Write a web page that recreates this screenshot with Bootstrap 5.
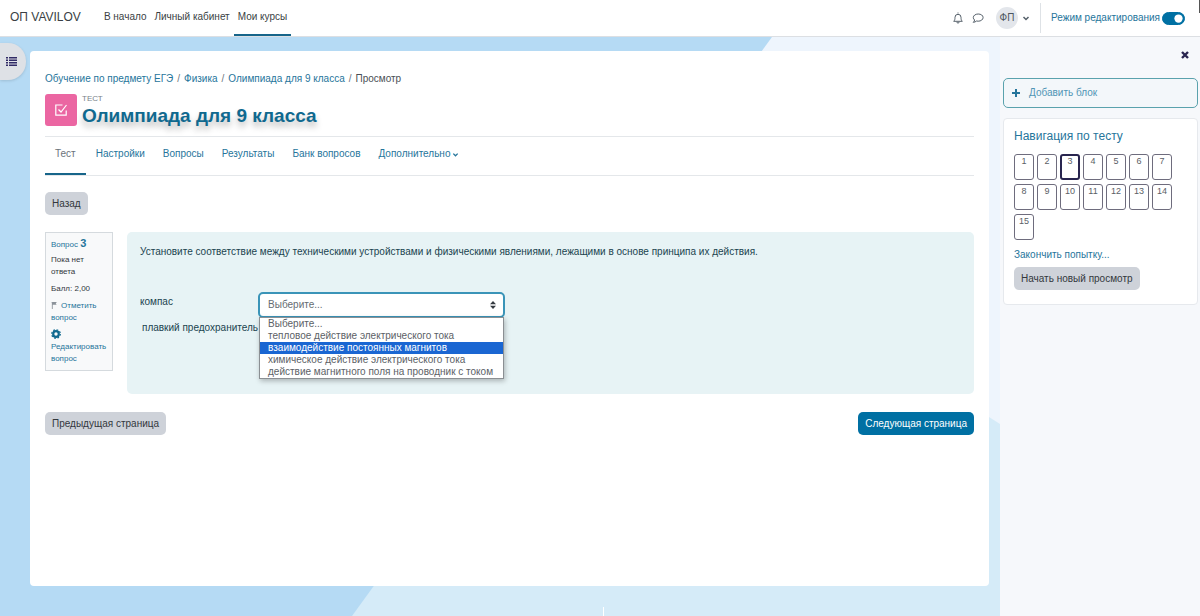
<!DOCTYPE html>
<html lang="ru">
<head>
<meta charset="utf-8">
<meta name="viewport" content="width=device-width, initial-scale=1">
<title>Олимпиада для 9 класса</title>
<link href="https://cdn.jsdelivr.net/npm/bootstrap@5.3.0/dist/css/bootstrap.min.css" rel="stylesheet">
<style>
:root{--brand:#0070a3;--line:#e4e7ea;--ink:#33383d}
body{font-family:"Liberation Sans",Arial,sans-serif;font-size:10px;line-height:12px;color:var(--ink);background:#b5daf4}
a{color:#26759b;text-decoration:none}
svg{display:block}
.topbar{height:37px;border-bottom:1px solid #dcdfe3;padding:0 10px;background:linear-gradient(#555,#555) right top/1px 13px no-repeat #fff}
.topbar .navbar-brand{font-size:12px;line-height:16px;color:#3a3f44;margin:0 19px 2px 0;padding:0}
.topbar .nav-link{font-size:10px;color:#3a3f44;padding:0 4px 1px;border-bottom:2px solid transparent;display:flex;align-items:center}
.topbar .nav-link.active{border-color:#17658a}
.avatar-dot{width:22px;height:22px;border-radius:50%;background:#e3e6eb;color:#4b5560}
.icon-btn{border:0;background:none;padding:0;color:#55606a}
.user-btn{margin-right:10px}
.edit-mode{border-left:1px solid #dee2e6;height:30px;padding:0 5px 0 10px;color:#26759b;gap:2px}
.edit-mode .form-check-input{width:23px;height:13px;margin:0;background-color:var(--brand);border-color:var(--brand)}
.backdrop-art{position:absolute;inset:0;width:100%;height:100%}
.stage{padding:14px 11px 30px 30px}
.index-toggle{position:absolute;left:0;top:6px;width:26px;height:37px;border:0;border-radius:0 18px 18px 0;background:#dee1e6;padding:0 0 0 6px;box-shadow:0 1px 3px #0002;color:#302b66}
.sheet{border-radius:4px;padding:22px 15px}
.breadcrumb{--bs-breadcrumb-item-padding-x:4px;--bs-breadcrumb-divider-color:#6c757d;--bs-breadcrumb-item-active-color:#4a4f55;font-size:10px;margin-bottom:9px}
.activity{gap:5px}
.activity-icon{width:32px;height:32px;border-radius:3px;background:#eb66a2}
.kind{font-size:8px;line-height:10px;color:#7a828a}
.title-text{font-size:19px;line-height:24px;font-weight:700;color:#10698f;text-shadow:0 5px 6px #0004}
.tabs{border-top:1px solid var(--line);border-bottom:1px solid var(--line);margin-top:8px;height:40px}
.tabs .nav-link{font-size:10px;color:#26759b;padding:0 9px 2px;border-bottom:2px solid transparent;display:flex;align-items:center;gap:2px}
.tabs .nav-link.active{color:#6b737b;border-color:#17658a;padding:0 10px 2px;margin-right:1px}
.btn{--bs-btn-font-size:10px;--bs-btn-line-height:13px;--bs-btn-padding-x:7px;--bs-btn-padding-y:5px;--bs-btn-border-radius:5px;--bs-btn-border-width:0}
.btn-soft{--bs-btn-bg:#ced2d9;--bs-btn-color:#33383d}
.btn-brand{--bs-btn-bg:#0070a3;--bs-btn-color:#fff}
.question{gap:14px;margin-top:17px}
.q-info{width:68px;border:1px solid #d5dade;background:#f8f9fa;padding:5px;font-size:8px}
.q-info div{margin-bottom:5px}
.q-info .q-no{margin-bottom:3px}
.q-info div:last-child{margin-bottom:0}
.q-info .gear{margin-bottom:2px}
.q-info b{font-size:11px;line-height:11px}
.q-body{background:#e7f3f5;border-radius:5px;padding:14px 13px;height:162px;color:#20434f}
.q-body table{margin-top:34px}
.q-body td{height:24px;padding:0;vertical-align:top}
.q-body td:first-child{padding:4px 0 0}
.q-body td.inset{padding-left:2px}
.pick{position:relative;width:247px}
.pick select{width:247px;height:26px;border:2px solid #3a94b8;border-radius:5px;background:#fff;color:#666c72;font-size:10px;padding:0 8px;appearance:none}
.pick svg{position:absolute;right:9px;top:9px}
.menu{position:absolute;left:1px;top:25px;width:245px;border:1px solid #8b8f93;background:#fff;box-shadow:1px 2px 5px #0004;color:#5c6166;margin:0;padding:0;list-style:none}
.menu li{padding:0 8px;line-height:12px}
.menu li.on{background:#1a66d2;color:#fff}
.pager{margin-top:18px}
.drawer{width:200px;background:#f6f8fb;padding:13px 2px 0 3px}
.add-block{border:1px solid #5aa2ad;border-radius:5px;height:30px;padding:0 8px;gap:9px;background:#f3f7fa;color:#5095b5;margin-top:18px}
.nav-block{margin-top:10px;border:1px solid #e6e9ed;border-radius:4px;padding:9px 10px 14px}
.nav-block h2{font-size:12px;line-height:16px;font-weight:400;color:#26759b;margin-bottom:10px}
.q-grid{gap:4px 3px}
.q-grid a{width:20px;height:26px;border:1px solid #6e6c7d;border-radius:3px;text-align:center;font-size:9px;line-height:13px;color:#5a5e66}
.q-grid a.here{border:2px solid #29254f;line-height:11px}
.finish{margin:9px 0 6px}
</style>
</head>
<body class="min-vh-100 d-flex flex-column">
<header class="topbar d-flex align-items-center">
  <a class="navbar-brand" href="#">ОП VAVILOV</a>
  <nav class="nav align-self-stretch">
    <a class="nav-link" href="#">В начало</a>
    <a class="nav-link" href="#">Личный кабинет</a>
    <a class="nav-link active" href="#">Мои курсы</a>
  </nav>
  <div class="ms-auto d-flex align-items-center">
    <button class="icon-btn me-2" aria-label="Уведомления"><svg width="12" height="12" viewBox="0 0 12 12" fill="none" stroke="currentColor"><path d="M6 .5v1M1.7 9.3c1-.9 1.3-2 1.3-4a3 3 0 0 1 6 0c0 2 .3 3.100 1.300 4zM4.900 10a1.100 1.100 0 0 0 2.200 0"/></svg></button>
    <button class="icon-btn me-2 pe-1" aria-label="Сообщения"><svg width="12" height="12" viewBox="0 0 12 12" fill="none" stroke="currentColor"><path d="M6.200 2C3.500 2 1.300 3.500 1.300 5.500c0 1 .5 1.900 1.300 2.500-.1 1-.7 1.700-1.400 2.300 1.300 0 2.500-.5 3.300-1.300.5.100 1.100.2 1.700.2 2.700 0 4.900-1.600 4.900-3.700S8.900 2 6.200 2z"/></svg></button>
    <button class="icon-btn user-btn d-flex align-items-center" aria-label="Меню пользователя"><span class="avatar-dot d-flex align-items-center justify-content-center me-1">ФП</span><svg width="8" height="8" viewBox="0 0 8 8" fill="none" stroke="currentColor" stroke-width="1.500"><path d="M1.500 3 4 5.500 6.500 3"/></svg></button>
    <div class="edit-mode d-flex align-items-center form-switch">
      <label for="edit">Режим редактирования</label>
      <input class="form-check-input" type="checkbox" role="switch" id="edit" checked>
    </div>
  </div>
</header>
<div class="d-flex flex-fill">
  <main class="stage position-relative flex-fill d-flex">
    <svg class="backdrop-art" viewBox="0 0 1000 579" preserveAspectRatio="none" aria-hidden="true"><path fill="#d5ebf8" d="M352 579 750 30h250v549z"/><path fill="#eef5fd" d="M772 0h228v387l-11-7L740 220V44z"/><path fill="#fff" d="M603 570h1v9h-1z"/></svg>
    <button class="index-toggle" aria-label="Содержание курса"><svg width="11" height="9" viewBox="0 0 11 9" fill="currentColor"><path d="M0 0h2v1.500H0zM3 0h8v1.500H3zM0 2.500h2V4H0zM3 2.500h8V4H3zM0 5h2v1.500H0zM3 5h8v1.500H3zM0 7.500h2V9H0zM3 7.500h8V9H3z"/></svg></button>
    <section class="sheet bg-white position-relative flex-fill">
      <nav aria-label="Путь"><ol class="breadcrumb">
        <li class="breadcrumb-item"><a href="#">Обучение по предмету ЕГЭ</a></li>
        <li class="breadcrumb-item"><a href="#">Физика</a></li>
        <li class="breadcrumb-item"><a href="#">Олимпиада для 9 класса</a></li>
        <li class="breadcrumb-item active">Просмотр</li>
      </ol></nav>
      <div class="activity d-flex">
        <div class="activity-icon d-flex align-items-center justify-content-center"><svg width="14" height="14" viewBox="0 0 14 14" fill="none" stroke="#fff" stroke-width="1.200"><path d="M8.500 2H1.800v10.200h10.400V7.500M4.500 6.500 7 9l5.500-7"/></svg></div>
        <div><div class="kind">ТЕСТ</div><h1 class="title-text mb-0">Олимпиада для 9 класса</h1></div>
      </div>
      <ul class="nav tabs align-items-stretch">
        <li class="nav-item d-flex"><a class="nav-link active" href="#">Тест</a></li>
        <li class="nav-item d-flex"><a class="nav-link" href="#">Настройки</a></li>
        <li class="nav-item d-flex"><a class="nav-link" href="#">Вопросы</a></li>
        <li class="nav-item d-flex"><a class="nav-link" href="#">Результаты</a></li>
        <li class="nav-item d-flex"><a class="nav-link" href="#">Банк вопросов</a></li>
        <li class="nav-item d-flex"><a class="nav-link" href="#">Дополнительно<svg width="7" height="7" viewBox="0 0 8 8" fill="none" stroke="currentColor" stroke-width="1.500"><path d="M1.500 3 4 5.500 6.500 3"/></svg></a></li>
      </ul>
      <button class="btn btn-soft mt-3">Назад</button>
      <div class="question d-flex align-items-start">
        <aside class="q-info flex-shrink-0">
          <div class="q-no"><a href="#">Вопрос <b>3</b></a></div>
          <div>Пока нет ответа</div>
          <div>Балл: 2,00</div>
          <div><a href="#"><svg class="d-inline me-1" width="6" height="7" viewBox="0 0 7 8" fill="#8b9299"><path d="M1 0h1v8H1zM0 0h7L5.500 1.500 6.500 3H2V1.500z"/></svg>Отметить вопрос</a></div>
          <div><a href="#"><svg class="gear" width="10" height="10" viewBox="0 0 10 10" fill="none" stroke="#10698f"><circle cx="5" cy="5" r="2.800" stroke-width="2.200"/><circle cx="5" cy="5" r="4.300" stroke-width="1.200" stroke-dasharray="1.700 1.677"/></svg>Редактировать вопрос</a></div>
        </aside>
        <div class="q-body flex-fill">
          <div>Установите соответствие между техническими устройствами и физическими явлениями, лежащими в основе принципа их действия.</div>
          <table>
            <tr><td><label for="a1">компас</label></td><td><div class="pick">
              <select id="a1"><option>Выберите...</option></select>
              <svg width="6" height="8" viewBox="0 0 6 8" fill="#343a40"><path d="M3 0 6 3.300H0zM3 8 0 4.700h6z"/></svg>
              <ul class="menu"><li>Выберите...</li><li>тепловое действие электрического тока</li><li class="on">взаимодействие постоянных магнитов</li><li>химическое действие электрического тока</li><li>действие магнитного поля на проводник с током</li></ul>
            </div></td></tr>
            <tr><td class="inset">плавкий предохранитель</td><td></td></tr>
          </table>
        </div>
      </div>
      <div class="pager d-flex justify-content-between">
        <button class="btn btn-soft">Предыдущая страница</button>
        <button class="btn btn-brand">Следующая страница</button>
      </div>
    </section>
  </main>
  <aside class="drawer flex-shrink-0">
    <div class="d-flex justify-content-end pe-2"><button class="icon-btn" aria-label="Закрыть"><svg width="10" height="10" viewBox="0 0 10 10" stroke="#29254f" stroke-width="2.400"><path d="m2 2 6 6M8 2 2 8"/></svg></button></div>
    <a href="#" class="add-block d-flex align-items-center"><svg width="8" height="8" viewBox="0 0 8 8" stroke="#26759b" stroke-width="2"><path d="M4 0v8M0 4h8"/></svg>Добавить блок</a>
    <section class="nav-block bg-white">
      <h2>Навигация по тесту</h2>
      <div class="q-grid d-flex flex-wrap">
        <a href="#">1</a><a href="#">2</a><a href="#" class="here">3</a><a href="#">4</a><a href="#">5</a><a href="#">6</a><a href="#">7</a><a href="#">8</a><a href="#">9</a><a href="#">10</a><a href="#">11</a><a href="#">12</a><a href="#">13</a><a href="#">14</a><a href="#">15</a>
      </div>
      <a href="#" class="finish d-block">Закончить попытку...</a>
      <button class="btn btn-soft">Начать новый просмотр</button>
    </section>
  </aside>
</div>
<script src="https://cdn.jsdelivr.net/npm/bootstrap@5.3.0/dist/js/bootstrap.bundle.min.js"></script>
</body>
</html>
